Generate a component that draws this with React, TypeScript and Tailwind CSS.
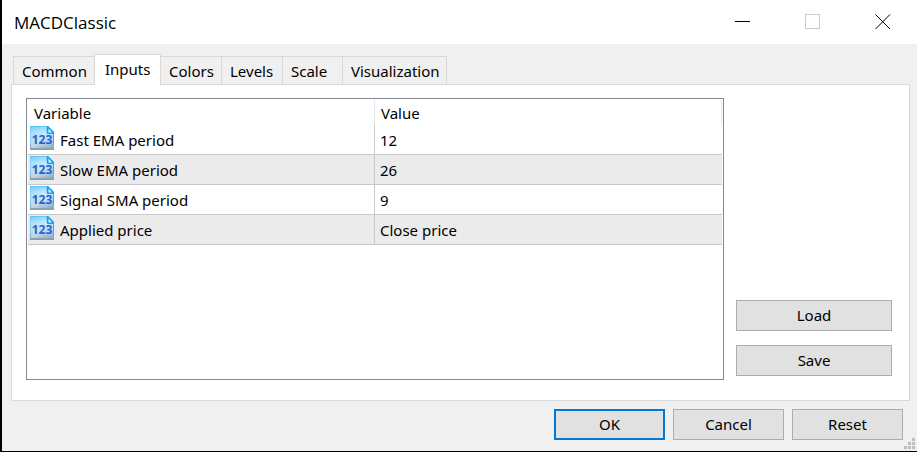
import { useState } from "react";

const tabs = [
  { name: "Common", width: "w-[82px]" },
  { name: "Inputs", width: "w-[67px]" },
  { name: "Colors", width: "w-[61px]" },
  { name: "Levels", width: "w-[61px]" },
  { name: "Scale", width: "w-[60px]" },
  { name: "Visualization", width: "w-[104px]" },
];

const rows = [
  { variable: "Fast EMA period", value: "12" },
  { variable: "Slow EMA period", value: "26" },
  { variable: "Signal SMA period", value: "9" },
  { variable: "Applied price", value: "Close price" },
];

function NumberIcon() {
  return (
    <svg width="24" height="24" viewBox="0 0 24 24" className="shrink-0" aria-hidden="true">
      <defs>
        <linearGradient id="sheet" x1="0" y1="0" x2="0" y2="1">
          <stop offset="0" stopColor="#5cc4fb" />
          <stop offset="0.3" stopColor="#93d8fd" />
          <stop offset="0.65" stopColor="#8fcaf0" />
          <stop offset="1" stopColor="#8d9ba5" />
        </linearGradient>
        <linearGradient id="shine" x1="0" y1="0" x2="1" y2="1">
          <stop offset="0" stopColor="#ffffff" stopOpacity="0.1" />
          <stop offset="0.5" stopColor="#ffffff" stopOpacity="0.5" />
          <stop offset="1" stopColor="#ffffff" stopOpacity="0" />
        </linearGradient>
      </defs>
      <path d="M0 0H18L24 6V24H0Z" fill="url(#sheet)" />
      <path d="M1 1H16V7H23V22H1Z" fill="url(#shine)" />
      <path d="M17 0H18L24 6V8H17Z" fill="#19a0ee" />
      <path d="M18.500 2.500L22 6.500H18.500Z" fill="#e4f6ff" />
      <path d="M23.500 8V19" stroke="#2fb0f2" />
      <text x="12" y="18" textAnchor="middle" fontFamily="'Noto Sans', sans-serif" fontSize="12" fontWeight="700" fill="#2c62c9">
        123
      </text>
    </svg>
  );
}

function PushButton({ label, size, primary }: { label: string; size: string; primary?: boolean }) {
  return (
    <button
      type="button"
      className={`${size} h-[31px] bg-[#e1e1e1] pb-0.5 ${primary ? "border-2 border-[#0078d7]" : "border border-[#adadad]"} flex items-center justify-center`}
    >
      {label}
    </button>
  );
}

export default function App() {
  const [active, setActive] = useState("Inputs");
  return (
    <div className="border-b border-l-2 border-black bg-[#f0f0f0] font-['Noto_Sans',sans-serif] text-[15px] leading-5 text-black">
      <header className="flex h-11 items-center justify-between bg-white pr-[26px] pl-3">
        <h1 className="pt-0.5 font-['Open_Sans',sans-serif] text-[17px]">MACDClassic</h1>
        <div className="flex gap-[54px]">
          <button type="button" aria-label="Minimize">
            <svg width="16" height="16" viewBox="0 0 16 16" shapeRendering="crispEdges">
              <path d="M0 7.500H15" stroke="#000" />
            </svg>
          </button>
          <button type="button" aria-label="Maximize" disabled>
            <svg width="16" height="16" viewBox="0 0 16 16" shapeRendering="crispEdges">
              <rect x="0.500" y="0.500" width="14" height="14" fill="none" stroke="#ccc" />
            </svg>
          </button>
          <button type="button" aria-label="Close">
            <svg width="16" height="16" viewBox="0 0 16 16">
              <path d="M0.500 0.500L15 15M15 0.500L0.500 15" stroke="#000" />
            </svg>
          </button>
        </div>
      </header>

      <main className="pt-2.5 pr-[7px] pl-[9px]">
        <div role="tablist" className="flex items-end pl-0.5">
          {tabs.map((tab, i) => {
            const on = tab.name === active;
            return (
              <button
                key={tab.name}
                type="button"
                role="tab"
                aria-selected={on}
                onClick={() => setActive(tab.name)}
                className={`${tab.width} flex justify-start border-t border-r border-[#d9d9d9] pt-1 ${i < 2 ? "border-l" : ""} ${i === 1 ? "-ml-px" : ""} ${on ? "relative -mb-px h-[31px] bg-white pl-2.5" : "h-7 pl-2"}`}
              >
                {tab.name}
              </button>
            );
          })}
        </div>

        <section className="flex gap-3 border border-[#d9d9d9] bg-white pt-[13px] pr-[17px] pb-5 pl-3.5">
          <div className="h-[282px] flex-1 border border-[#828790] p-px">
            <table className="w-full table-fixed border-separate border-spacing-0 text-left">
              <thead>
                <tr>
                  <th className="h-[25px] border-r border-[#e5e5e5] p-0 pl-1.5 font-normal">Variable</th>
                  <th className="h-[25px] border-r border-[#e5e5e5] p-0 pl-1.5 font-normal">Value</th>
                </tr>
              </thead>
              <tbody>
                {rows.map((row) => (
                  <tr key={row.variable} className="even:bg-[#ebebeb]">
                    <td className="h-[30px] border-r border-b border-[#c8c8c8] p-0 pl-0.5">
                      <div className="flex items-end gap-1.5 pb-1">
                        <NumberIcon />
                        {row.variable}
                      </div>
                    </td>
                    <td className="h-[30px] border-b border-[#c8c8c8] p-0 pl-[5px]">{row.value}</td>
                  </tr>
                ))}
              </tbody>
            </table>
          </div>
          <div className="flex flex-col justify-end gap-3.5 pb-1">
            <PushButton label="Load" size="w-[156px]" />
            <PushButton label="Save" size="w-[156px]" />
          </div>
        </section>
      </main>

      <footer className="relative flex justify-end gap-2 pt-2 pr-3.5 pb-[11px]">
        <PushButton label="OK" size="w-[111px]" primary />
        <PushButton label="Cancel" size="w-[111px]" />
        <PushButton label="Reset" size="w-[111px]" />
        <svg className="absolute right-0.5 bottom-0.5" width="11" height="11" viewBox="0 0 11 11" fill="#bfbfbf" aria-hidden="true">
          <path d="M8 0h3v3h-3zM4 4h3v3h-3zM8 4h3v3h-3zM0 8h3v3h-3zM4 8h3v3h-3zM8 8h3v3h-3z" />
        </svg>
      </footer>
    </div>
  );
}
